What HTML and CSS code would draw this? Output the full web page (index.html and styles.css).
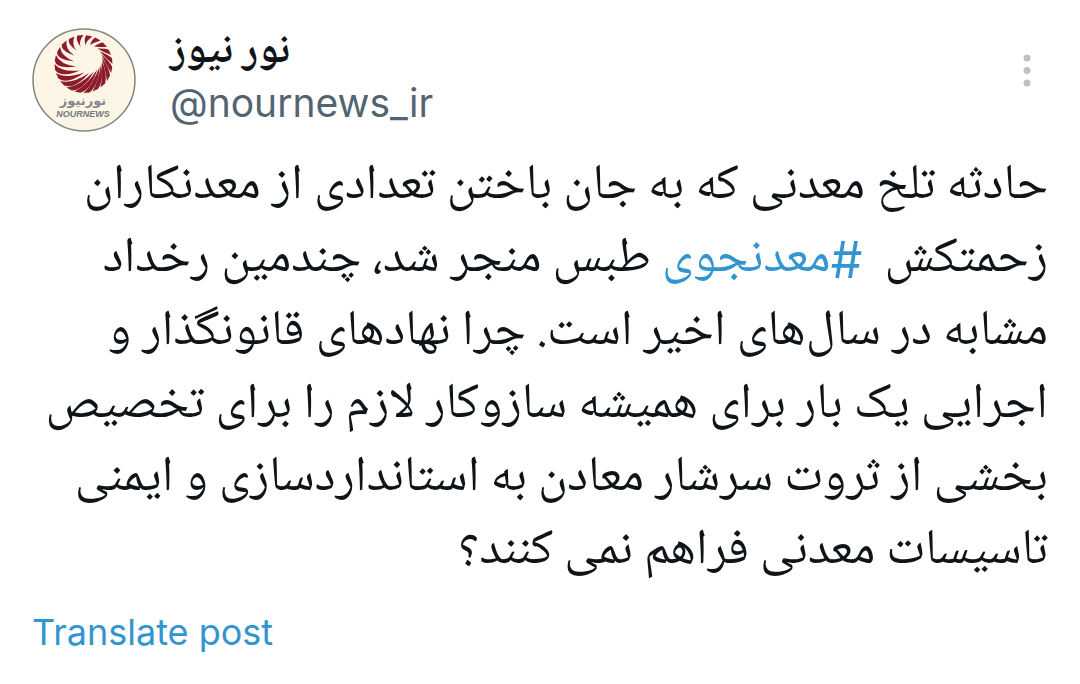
FILE: index.html
```
<!DOCTYPE html>
<html lang="fa">
<head>
  <meta charset="UTF-8">
  <meta name="viewport" content="width=device-width, initial-scale=1.0">
  <title>نور نیوز</title>
  <link rel="stylesheet" href="styles.css">
</head>
<body>
  <article class="post">
    <header class="post-header">
      <svg class="avatar" viewBox="0 0 104 104" role="img" aria-label="NOURNEWS">
        <circle cx="52" cy="52" r="51" fill="#fdf6e6" stroke="#85857f" stroke-width="1.5"/>
        <g id="swirl" fill="#8c1c2c"></g>
        <text class="logo-fa" x="51" y="77" text-anchor="middle">نورنیوز</text>
        <text class="logo-en" x="51" y="89" text-anchor="middle">NOURNEWS</text>
      </svg>
      <div class="author">
        <h1 class="name" dir="rtl">نور نیوز</h1>
        <a class="handle" href="#">@nournews_ir</a>
      </div>
      <button class="menu" type="button" aria-label="More">
        <svg viewBox="0 0 8 34" fill="#b9c2cb">
          <circle cx="4" cy="4" r="3.5"/>
          <circle cx="4" cy="16.5" r="3.5"/>
          <circle cx="4" cy="29" r="3.5"/>
        </svg>
      </button>
    </header>

    <p class="post-text" dir="rtl">حادثه تلخ معدنی که به جان باختن تعدادی از معدنکاران زحمتکش &nbsp;<a class="hashtag" href="#"><span class="hash">#</span>معدنجوی</a> طبس منجر شد، چندمین رخداد مشابه در سال‌های اخیر است. چرا نهادهای قانونگذار و اجرایی یک بار برای همیشه سازوکار لازم را برای تخصیص بخشی از ثروت سرشار معادن به استانداردسازی و ایمنی تاسیسات معدنی فراهم نمی کنند؟</p>

    <button class="translate" type="button">Translate post</button>
  </article>

  <script src="logo.js"></script>
</body>
</html>
```
FILE: styles.css
```
body {
  margin: 0;
  background: #fff;
  color: #0f1419;
  font-family: Inter, sans-serif;
}
.post {
  padding: 28px 32px;
}
.post-header {
  display: flex;
  align-items: flex-start;
}
.avatar {
  width: 104px;
  height: 104px;
  flex: none;
}
.logo-fa {
  font: bold 13px "DejaVu Sans", sans-serif;
  fill: #85858a;
}
.logo-en {
  font: italic bold 9px "Liberation Sans", sans-serif;
  fill: #77777c;
}
.author {
  flex: 1;
  display: flex;
  flex-direction: column;
  align-items: flex-start;
  padding-left: 34px;
}
.name {
  margin: 0;
  font-family: "Noto Naskh Arabic UI", "Liberation Serif", serif;
  font-size: 42px;
  font-weight: bold;
  line-height: 48px;
}
.handle {
  color: #536471;
  font-size: 39px;
  line-height: 54px;
  text-decoration: none;
}
.menu {
  margin-top: 26px;
  padding: 0 17px;
  border: none;
  background: none;
  cursor: pointer;
}
.menu svg {
  display: block;
  width: 8px;
  height: 34px;
}
.post-text {
  margin: 18px 0 20px;
  font-family: "Noto Naskh Arabic UI", "Liberation Serif", serif;
  font-size: 50px;
  line-height: 73px;
}
.hashtag {
  color: #3395cf;
  text-decoration: none;
}
.hash {
  font-family: Inter, sans-serif;
  line-height: 1;
}
.translate {
  padding: 0;
  border: none;
  background: none;
  color: #3395cf;
  font-family: Inter, sans-serif;
  font-size: 36px;
  line-height: 48px;
  cursor: pointer;
}
```
FILE: logo.js
```
// blades run from the outer circle to an off-centre hole
const swirl = document.getElementById('swirl');
const outer = { x: 51.5, y: 36, r: 29 };
const hole = { x: 56, y: 31, r: 14 };
const blades = 20;

function pointOn(circle, deg, scale = 1) {
  const a = deg * Math.PI / 180;
  const x = circle.x + circle.r * scale * Math.cos(a);
  const y = circle.y + circle.r * scale * Math.sin(a);
  return x.toFixed(1) + ' ' + y.toFixed(1);
}

for (let i = 0; i < blades; i++) {
  const deg = i * 360 / blades;
  // the blades at the upper right are shorter and sweep less
  const far = (1 - Math.cos((deg + 50) * Math.PI / 180)) / 2;
  const sweep = 28 + 32 * far;
  const path = document.createElementNS('http://www.w3.org/2000/svg', 'path');
  path.setAttribute('d',
    `M${pointOn(outer, deg)} Q${pointOn(outer, deg - sweep * 0.4, 0.8)} ${pointOn(hole, deg - sweep)}` +
    ` Q${pointOn(outer, deg - sweep * 0.6, 0.92)} ${pointOn(outer, deg - 12)} Z`);
  swirl.appendChild(path);
}
```
